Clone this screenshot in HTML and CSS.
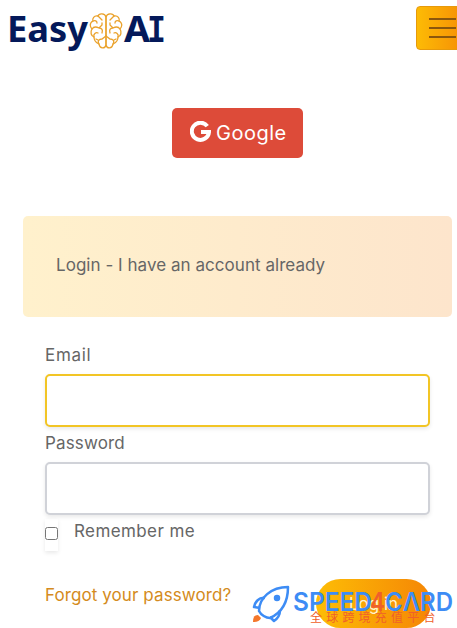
FILE: index.html
```html
<!DOCTYPE html>
<html lang="en">
<head>
  <meta charset="UTF-8">
  <meta name="viewport" content="width=device-width, initial-scale=1">
  <title>Easy AI - Login</title>
  <link rel="stylesheet" href="styles.css">
</head>
<body>
  <header class="navbar">
    <a class="logo" href="#">
      <svg width="180" height="56" viewBox="0 0 180 56">
        <g class="logo-text">
          <text x="7" y="42" textLength="81" lengthAdjust="spacingAndGlyphs">Easy</text>
          <text x="124" y="42" textLength="26" lengthAdjust="spacingAndGlyphs">A</text>
          <text class="logo-i" x="147" y="42" textLength="19" lengthAdjust="spacingAndGlyphs">I</text>
        </g>
        <!-- brain -->
        <g class="brain">
          <path d="M106 17c-1-4-7-4-8-1-4-1-6 3-5 5-4 2-3 6-1 8-2 3-1 7 2 8 0 5 3 6 5 7 1 5 6 5 7 1z"/>
          <path d="M106 17c1-4 7-4 8-1 4-1 6 3 5 5 4 2 3 6 1 8 2 3 1 7-2 8 0 5-3 6-5 7-1 5-6 5-7 1z"/>
          <path d="M98 16l4 4M93 21c2-1 4 0 4 2M92 29c2-3 5-2 7-1l3-3v-2M99 28c3 0 4 2 3 5M94 37c-1-3 2-5 4-4M99 44c-2-3 0-5 3-5l4-3M96 39l2 1"/>
          <path d="M114 16l-4 4M119 21c-2-1-4 0-4 2M120 29c-2-3-5-2-7-1l-3-3v-2M113 28c-3 0-4 2-3 5M118 37c1-3-2-5-4-4M113 44c2-3 0-5-3-5l-4-3M116 39l-2 1"/>
        </g>
      </svg>
    </a>
    <button class="menu-btn" aria-label="Menu">
      <span></span>
      <span></span>
      <span></span>
    </button>
  </header>

  <main>
    <a class="google-btn" href="#">
      <svg width="21" height="22" viewBox="0 0 21 22">
        <path d="M17.3 5.1A8.6 8.6 0 1 0 19 11H11" fill="none" stroke="#fff" stroke-width="4"/>
      </svg>
      <span class="google-text">Google</span>
    </a>

    <div class="login-title"><span>Login - I have an account already</span></div>

    <form class="login-form">
      <label class="email-label" for="email">Email</label>
      <input class="field active" type="text" id="email">
      <label class="password-label" for="password">Password</label>
      <input class="field" type="password" id="password">
      <div class="remember">
        <span class="check-wrap"><input type="checkbox" id="remember"></span>
        <label class="remember-label" for="remember">Remember me</label>
      </div>
      <div class="form-footer">
        <a class="forgot" href="#">Forgot your password?</a>
        <button class="login-btn" type="button">Log in</button>
      </div>
    </form>
  </main>

  <!-- watermark over the page -->
  <div class="watermark">
    <svg width="207" height="46" viewBox="0 0 207 46">
      <g class="rocket">
        <path d="M9 29C9 16 21 5 38 5c0 15-5 25-18 31-4 0-9-3-11-7z"/>
        <path d="M15 16c-6-1-10 4-11 9l6 1M30 28c0 5-3 9-6 11l-4-4"/>
        <circle cx="27" cy="16" r="2"/>
      </g>
      <path class="flame" d="M8 33c-4 0-5 3-5 7 4 0 7-1 8-4z"/>
      <g class="brand">
        <text x="43" y="29" textLength="79" lengthAdjust="spacingAndGlyphs">SPEED</text>
        <text class="four" x="120" y="29" textLength="15" lengthAdjust="spacingAndGlyphs">4</text>
        <text x="135" y="29" textLength="68" lengthAdjust="spacingAndGlyphs">CΛRD</text>
      </g>
      <text class="slogan" x="60" y="40">全球跨境充值平台</text>
    </svg>
  </div>
</body>
</html>
```

FILE: styles.css
```css
* {
  box-sizing: border-box;
}
body {
  margin: 0;
  height: 628px;
  overflow: hidden;
  background: #fff;
  color: #666;
  font-family: Inter, "Open Sans", sans-serif;
  font-size: 17px;
  line-height: 24px;
}
a {
  text-decoration: none;
}
.navbar {
  display: flex;
  height: 56px;
  padding-top: 6px;
}
.logo {
  flex: none;
  width: 416px;
  margin-top: -6px;
}
.logo svg {
  display: block;
  overflow: visible;
}
.logo-text {
  fill: #04195a;
  font-family: "Noto Sans", "Open Sans", sans-serif;
  font-size: 35px;
  font-weight: 700;
}
.logo-i {
  font-family: "DejaVu Sans Mono", monospace;
}
.brain {
  fill: none;
  stroke: #eaa22c;
  stroke-width: 1.3;
  stroke-linecap: round;
}
.menu-btn {
  flex: none;
  display: flex;
  flex-direction: column;
  gap: 7px;
  width: 54px;
  height: 44px;
  padding: 11px 12px;
  border: 1px solid #e79a0b;
  border-radius: 4px;
  background: linear-gradient(90deg, #fdbb05, #f58a05);
}
.menu-btn span {
  width: 27px;
  height: 2px;
  background: #8b570c;
}
.google-btn {
  display: flex;
  align-items: center;
  gap: 5px;
  width: 131px;
  height: 50px;
  margin: 52px 0 0 172px;
  padding-left: 18px;
  border-radius: 5px;
  background: #dd4b39;
  color: #fff;
}
.google-btn svg {
  margin-top: -2px;
}
.google-text {
  font-size: 20px;
  letter-spacing: 0.5px;
}
.login-title {
  display: flex;
  align-items: center;
  width: 429px;
  height: 101px;
  margin: 58px 0 0 23px;
  padding: 0 0 3px 33px;
  border-radius: 5px;
  background: linear-gradient(90deg, #fff1cc, #fde5cc);
  letter-spacing: 0.04px;
}
.login-form {
  width: 385px;
  margin: 26px 0 0 45px;
}
.login-form label {
  display: block;
  width: max-content;
}
.email-label {
  letter-spacing: 0.7px;
}
.password-label {
  letter-spacing: 0.15px;
}
.remember-label {
  letter-spacing: 0.4px;
}
.field {
  display: block;
  width: 385px;
  height: 53px;
  margin: 7px 0 4px;
  padding: 0 12px;
  border: 2px solid #d0d2d8;
  border-radius: 5px;
  background: #fff;
  box-shadow: 0 2px 4px rgba(0, 0, 0, 0.09);
  outline: none;
}
.field.active {
  border-color: #f2c525;
}
.remember {
  display: flex;
  height: 36px;
}
.check-wrap {
  display: flex;
  align-items: center;
  width: 13px;
  height: 32px;
  margin-right: 16px;
  padding-bottom: 4px;
  box-shadow: 0 2px 4px rgba(0, 0, 0, 0.09);
}
.check-wrap input {
  width: 13px;
  height: 13px;
  margin: 0;
}
.form-footer {
  display: flex;
  justify-content: space-between;
  margin-top: 24px;
}
.forgot {
  margin-top: 4px;
  color: #d48b20;
  letter-spacing: 0.09px;
}
.login-btn {
  width: 115px;
  height: 49px;
  margin-right: -1px;
  border: 0;
  border-radius: 25px;
  background: linear-gradient(90deg, #fdbd06, #f58605);
  color: #fff2cf;
  font-family: inherit;
  font-size: 17px;
}
.watermark {
  position: absolute;
  left: 250px;
  top: 582px;
}
.rocket {
  fill: none;
  stroke: #3d8cf5;
  stroke-width: 2.5;
  stroke-linejoin: round;
}
.rocket circle {
  fill: #3d8cf5;
}
.flame {
  fill: #f4772b;
}
.brand {
  fill: #3d8cf5;
  font-family: Inter, sans-serif;
  font-size: 25px;
  font-weight: 600;
}
.four {
  fill: #f0602a;
}
.slogan {
  fill: #f0602a;
  font-family: "Noto Sans CJK SC", sans-serif;
  font-size: 12px;
  letter-spacing: 4.2px;
}
```
